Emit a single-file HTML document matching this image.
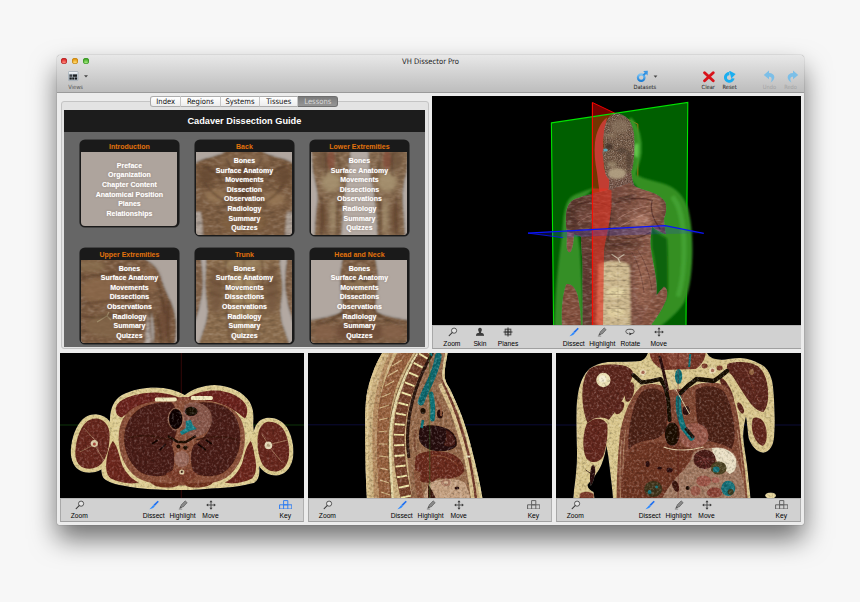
<!DOCTYPE html>
<html><head><meta charset="utf-8"><title>VH Dissector Pro</title>
<style>
html,body{margin:0;padding:0}
body{width:860px;height:602px;background:#f7f7f7;position:relative;overflow:hidden;font-family:"Liberation Sans","DejaVu Sans",sans-serif}
.abs{position:absolute}
#win{position:absolute;left:57px;top:55px;width:747px;height:470px;background:#ececec;border-radius:4px 4px 2px 2px;box-shadow:0 14px 27px rgba(0,0,0,.55),0 0 1px rgba(0,0,0,.6)}
#tbar{position:absolute;left:57px;top:55px;width:747px;height:38px;border-radius:4px 4px 0 0;background:linear-gradient(#e8e8e8,#d0d0d0 55%,#bdbdbd);border-bottom:1px solid #9a9a9a;box-sizing:border-box}
#title{position:absolute;left:57px;width:747px;top:57px;text-align:center;font:7.6px "DejaVu Sans Condensed","Liberation Sans",sans-serif;color:#222}
.tl{position:absolute;top:57.5px;width:6.4px;height:6.4px;border-radius:50%}
.tlab{position:absolute;font:5.7px "DejaVu Sans Condensed","Liberation Sans",sans-serif;color:#333;text-align:center;width:40px;margin-left:-20px;white-space:nowrap}
.lbl{position:absolute;font:6.7px "Liberation Sans",sans-serif;color:#000;text-align:center;width:40px;margin-left:-20px;white-space:nowrap}
.bar{position:absolute;background:#d1d1d1;border-top:1px solid #b5b5b5;box-sizing:border-box}
.view{position:absolute;background:#000;overflow:hidden}
.card{position:absolute;width:98.5px;height:96px;border-radius:5px;background:#1a1a1a;overflow:hidden;box-shadow:0 0 0 .6px #222}
.card .hd{position:absolute;left:0;top:0;width:100%;height:12.3px;text-align:center;color:#e2730c;font:bold 7px/13.6px "Liberation Sans",sans-serif}
.card .im{position:absolute;left:1.3px;top:12.3px;right:1.3px;bottom:1.2px;border-radius:0 0 4px 4px;background:#aea49d;overflow:hidden}
.card .tx{position:absolute;left:0;width:100%;text-align:center;color:#fff;font:bold 7px/9.63px "Liberation Sans",sans-serif;text-shadow:0 0 1.2px rgba(255,255,255,.55),0 0 2px rgba(80,50,30,.5)}
.tab{position:absolute;top:95.7px;height:11px;box-sizing:border-box;border:1px solid #adadad;border-left:none;border-right-color:#c6c6c6;background:linear-gradient(#ffffff,#ededed);font:7.6px/9.4px "DejaVu Sans Condensed","Liberation Sans",sans-serif;color:#111;text-align:center}
</style></head><body>
<div id="win"></div>
<div id="tbar"></div>
<div class="tl" style="left:61.1px;background:radial-gradient(circle at 50% 78%,#ff8f80,#dc2a2c 62%);box-shadow:inset 0 0 0 .5px #a8201f"></div>
<div class="tl" style="left:71.9px;background:radial-gradient(circle at 50% 78%,#ffe07a,#e69a12 62%);box-shadow:inset 0 0 0 .5px #b87a0e"></div>
<div class="tl" style="left:82.5px;background:radial-gradient(circle at 50% 78%,#a8ec82,#45aa2a 62%);box-shadow:inset 0 0 0 .5px #2f8a1c"></div>
<div id="title">VH Dissector Pro</div>
<!-- group box -->
<div class="abs" style="left:60.5px;top:101.4px;width:368.5px;height:247.5px;box-sizing:border-box;border:1px solid #c4c4c4;border-radius:3px;background:#e3e3e3"></div>
<!-- tabs -->
<div class="tab" style="left:150.2px;width:31px;border-left:1px solid #a8a8a8;border-radius:3px 0 0 3px">Index</div>
<div class="tab" style="left:181.2px;width:39.5px">Regions</div>
<div class="tab" style="left:220.7px;width:39.5px">Systems</div>
<div class="tab" style="left:260.2px;width:38px">Tissues</div>
<div class="tab" style="left:298.2px;width:40.2px;border-radius:0 3px 3px 0;background:linear-gradient(#7a7a7a,#969696);color:#d8d8d8;border-color:#6e6e6e">Lessons</div>
<!-- toolbar items -->
<svg class="abs" style="left:68px;top:71px" width="22" height="11" viewBox="0 0 22 11">
 <rect x=".4" y=".6" width="9.6" height="9" rx=".8" fill="#c9d3dc" stroke="#8a96a2" stroke-width=".5"/>
 <rect x=".9" y="1" width="8.6" height="1.6" fill="#eef1f4"/>
 <rect x="1.4" y="3.4" width="3" height="2.4" fill="#3a3f44"/><rect x="5" y="3.4" width="4" height="2.4" fill="#1c1f22"/>
 <rect x="1.4" y="6.4" width="2.4" height="2.2" fill="#15181a"/><rect x="4.2" y="6.4" width="2.2" height="2.2" fill="#15181a"/><rect x="6.9" y="6.4" width="2.2" height="2.2" fill="#15181a"/>
 <path d="M16 4.2 L20 4.2 L18 6.6Z" fill="#444"/>
</svg>
<div class="tlab" style="left:75.6px;top:83.5px;color:#555">Views</div>

<svg class="abs" style="left:636px;top:69.5px" width="24" height="13" viewBox="0 0 24 13">
 <defs><linearGradient id="gbl" x1="0" y1="0" x2="0" y2="1"><stop offset="0" stop-color="#7cc4f6"/><stop offset="1" stop-color="#1c7fd6"/></linearGradient></defs>
 <circle cx="5.2" cy="7.6" r="3.3" fill="none" stroke="url(#gbl)" stroke-width="2.2"/>
 <path d="M7.4 5.2 L10.6 2.1" stroke="#2f8fe0" stroke-width="2" />
 <path d="M7.2 1.1 L11.8 .8 L11.5 5.4Z" fill="#3b97e4"/>
 <path d="M17.6 5.4 L21.4 5.4 L19.5 7.7Z" fill="#444"/>
</svg>
<div class="tlab" style="left:644.9px;top:83.6px;color:#222">Datasets</div>

<svg class="abs" style="left:702px;top:71px" width="14" height="12" viewBox="0 0 14 12">
 <path d="M2.6 1.8 L11.2 9.8 M11.2 1.8 L2.6 9.8" stroke="#d8121a" stroke-width="2.9" stroke-linecap="round"/>
</svg>
<div class="tlab" style="left:708.3px;top:83.6px;color:#222">Clear</div>

<svg class="abs" style="left:723px;top:70.5px" width="14" height="13" viewBox="0 0 14 13">
 <path d="M6.4 1 A5.4 5.4 0 1 0 11.6 7.6 L8.6 7.2 A2.4 2.4 0 1 1 6.4 4.2Z" fill="#1aaef0"/>
 <path d="M6 -0.6 L12.6 3 L8.4 7.6Z" fill="#1aaef0"/>
</svg>
<div class="tlab" style="left:729.6px;top:83.6px;color:#222">Reset</div>

<svg class="abs" style="left:763px;top:70px" width="14" height="14" viewBox="0 0 14 14">
 <path d="M6 .6 L.8 5 L6 9.2 L6 6.8 C8.6 6.8 9.6 8.6 7.6 12.6 C13 9.6 12.6 3.2 6 3Z" fill="#72bcea" opacity=".9"/>
</svg>
<div class="tlab" style="left:769.4px;top:83.6px;color:#a4a4a4">Undo</div>
<svg class="abs" style="left:784.5px;top:70px" width="14" height="14" viewBox="0 0 14 14">
 <path d="M8 .6 L13.2 5 L8 9.2 L8 6.8 C5.4 6.8 4.4 8.6 6.4 12.6 C1 9.6 1.4 3.2 8 3Z" fill="#72bcea" opacity=".9"/>
</svg>
<div class="tlab" style="left:790.6px;top:83.6px;color:#a4a4a4">Redo</div>
<!-- lessons panel -->
<div class="abs" style="left:64.2px;top:109.5px;width:360.4px;height:237.4px;background:#666"></div>
<div class="abs" style="left:64.2px;top:109.5px;width:360.4px;height:22.1px;background:#1c1c1c;color:#fff;text-align:center;font:bold 9.2px/23px 'Liberation Sans',sans-serif">Cadaver Dissection Guide</div>
<svg width="0" height="0" style="position:absolute"><defs>
<filter id="b1" x="-20%" y="-20%" width="140%" height="140%"><feGaussianBlur stdDeviation="1.1"/></filter>
<filter id="b2" x="-20%" y="-20%" width="140%" height="140%"><feGaussianBlur stdDeviation="2.2"/></filter>
<filter id="ctex" x="0" y="0" width="100%" height="100%" color-interpolation-filters="sRGB"><feTurbulence type="fractalNoise" baseFrequency="0.15 0.3" numOctaves="2" seed="2" result="n"/><feColorMatrix in="n" type="matrix" values="0.22 0 0 0 0.39  0.22 0 0 0 0.39  0.22 0 0 0 0.39  0 0 0 0 1" result="g"/><feBlend in="SourceGraphic" in2="g" mode="overlay" result="b"/><feComposite in="b" in2="SourceGraphic" operator="in"/></filter>
<filter id="b05" x="-20%" y="-20%" width="140%" height="140%"><feGaussianBlur stdDeviation="0.6"/></filter>
</defs></svg>

<div class="card" style="left:80.2px;top:140.2px;height:86.6px">
 <div class="hd">Introduction</div><div class="im"></div>
 <div class="tx" style="top:20.5px">Preface<br>Organization<br>Chapter Content<br>Anatomical Position<br>Planes<br>Relationships</div>
</div>

<div class="card" style="left:195.2px;top:140.2px">
 <div class="hd">Back</div>
 <div class="im"><svg width="96" height="83" viewBox="0 0 96 83" style="position:absolute;left:0;top:0">
  <rect width="96" height="83" fill="#b0a69f"/>
  <g filter="url(#ctex)"><g filter="url(#b1)">
   <path d="M30 -2 L66 -2 C68 1 74 3 82 5 C88 6.6 94 9 98 11 L98 85 L89 85 C89 75 91 66 93 58 L93 40 L3 40 L3 58 C5 66 7 75 7 85 L-2 85 L-2 11 C2 9 8 6.6 14 5 C22 3 28 1 30 -2Z" fill="#7b5d42"/>
   <rect x="3" y="14" width="90" height="72" fill="#7b5d42"/>
   <path d="M-2 60 L5 60 C6 68 7 76 7 85 L-2 85Z" fill="#a99c92"/>
   <path d="M98 60 L91 60 C90 68 89 76 89 85 L98 85Z" fill="#a99c92"/>
  </g></g>
  <g filter="url(#b2)" opacity=".8">
   <ellipse cx="20" cy="44" rx="11" ry="7" fill="#9a7a58"/>
   <ellipse cx="78" cy="47" rx="11" ry="7" fill="#9a7a58"/>
   <ellipse cx="48" cy="30" rx="10" ry="20" fill="#6a4c34"/>
   <ellipse cx="10" cy="24" rx="8" ry="10" fill="#664830"/>
   <ellipse cx="88" cy="24" rx="8" ry="10" fill="#664830"/>
   <ellipse cx="48" cy="70" rx="22" ry="12" fill="#80603f"/>
   <ellipse cx="48" cy="8" rx="26" ry="5" fill="#8a6c50"/>
  </g>
   <g filter="url(#b1)" fill="none" stroke="#4a3222" stroke-width="1.4" opacity=".7">
   <path d="M48 4 V80"/><path d="M30 6 C36 18 42 30 48 44 C54 30 60 18 66 6"/><path d="M8 30 C14 40 24 48 34 50 M88 32 C82 42 72 50 62 52"/><path d="M6 14 C14 16 22 22 26 30 M90 14 C82 16 74 22 70 30"/>
  </g>
</svg></div>
 <div class="tx" style="top:15.8px">Bones<br>Surface Anatomy<br>Movements<br>Dissection<br>Observation<br>Radiology<br>Summary<br>Quizzes</div>
</div>

<div class="card" style="left:310.2px;top:140.2px">
 <div class="hd">Lower Extremities</div>
 <div class="im"><svg width="96" height="83" viewBox="0 0 96 83" style="position:absolute;left:0;top:0">
  <rect width="96" height="83" fill="#b4aaa3"/>
  <g filter="url(#ctex)"><g filter="url(#b1)">
   <path d="M0 -2 L40 -2 C39 10 37.6 20 36.6 27 C35.6 32 34.6 36 34 40 C33 52 31.6 66 30.6 85 L3 85 C4 72 5 60 6.4 48 C6.6 40 4 30 1.6 20Z" fill="#866a50"/>
   <path d="M57 -2 L98 -2 L96 20 C93 30 91.6 40 92 48 C92.6 60 93.6 72 94.6 85 L66 85 C65.6 66 64 52 62.6 40 C62 36 60.6 32 59.6 27 C58.6 20 57.6 10 57 -2Z" fill="#866a50"/>
  </g></g>
  <g filter="url(#b2)" opacity=".85">
   <ellipse cx="20" cy="30" rx="10" ry="10" fill="#a89472"/>
   <ellipse cx="76" cy="30" rx="10" ry="10" fill="#a89472"/>
   <ellipse cx="12" cy="8" rx="7" ry="10" fill="#70543c"/>
   <ellipse cx="84" cy="8" rx="7" ry="10" fill="#70543c"/>
   <ellipse cx="12" cy="66" rx="5" ry="16" fill="#6e5038"/>
   <ellipse cx="84" cy="66" rx="5" ry="16" fill="#6e5038"/>
   <ellipse cx="22" cy="64" rx="3" ry="18" fill="#a49070"/>
   <ellipse cx="74" cy="64" rx="3" ry="18" fill="#a49070"/>
  </g>
   <g filter="url(#b1)" fill="none" stroke="#4e3424" stroke-width="1.4" opacity=".65">
   <path d="M14 0 C16 10 16 18 14 24 M26 0 C26 8 28 16 32 22 M82 0 C80 10 80 18 82 24 M70 0 C70 8 68 16 64 22"/><path d="M10 44 C12 56 12 70 10 83 M86 44 C84 56 84 70 86 83 M28 46 C26 58 26 70 27 83 M68 46 C70 58 70 70 69 83"/>
  </g>
  <g filter="url(#b1)" fill="#8a4434" opacity=".5"><ellipse cx="20" cy="8" rx="4" ry="10"/><ellipse cx="76" cy="8" rx="4" ry="10"/></g>
</svg></div>
 <div class="tx" style="top:15.8px">Bones<br>Surface Anatomy<br>Movements<br>Dissections<br>Observations<br>Radiology<br>Summary<br>Quizzes</div>
</div>

<div class="card" style="left:80.2px;top:247.8px">
 <div class="hd">Upper Extremities</div>
 <div class="im"><svg width="96" height="83" viewBox="0 0 96 83" style="position:absolute;left:0;top:0">
  <rect width="96" height="83" fill="#aea49d"/>
  <g filter="url(#ctex)"><g filter="url(#b1)">
   <path d="M-2 -2 L62 -2 C72 2 78 10 81 20 C84 30 90 40 93 50 C96 60 96 72 94 85 L72 85 C74 72 72 60 70 52 C70 62 70 74 72 85 L-2 85Z" fill="#7c5c42"/>
   <path d="M66 52 C68 62 70 72 70 85 L64 85 C65 74 66 62 66 52Z" fill="#aea49d"/>
  </g></g>
  <g filter="url(#b2)" opacity=".8">
   <ellipse cx="24" cy="30" rx="24" ry="14" fill="#8c6a4c"/>
   <ellipse cx="70" cy="20" rx="8" ry="12" fill="#8a6648"/>
   <ellipse cx="30" cy="66" rx="26" ry="12" fill="#82664a"/>
   <ellipse cx="84" cy="60" rx="6" ry="20" fill="#6c4a34"/>
   <ellipse cx="10" cy="6" rx="14" ry="6" fill="#8a7050"/>
  </g>
  <path d="M16 62 L26 56 L30 60 M26 56 L28 52" stroke="#b4a680" stroke-width="1.2" fill="none" filter="url(#b05)" opacity=".6"/>
   <g filter="url(#b1)" fill="none" stroke="#4a3020" stroke-width="1.4" opacity=".65">
   <path d="M0 18 C16 16 36 14 56 8"/><path d="M0 44 C14 42 30 40 50 40 C58 36 62 28 62 16"/><path d="M74 14 C78 26 82 40 84 54 M88 40 C86 54 86 68 88 83 M76 54 C78 64 80 74 80 83"/><path d="M0 56 C12 58 26 58 40 54"/>
  </g>
</svg></div>
 <div class="tx" style="top:15.8px">Bones<br>Surface Anatomy<br>Movements<br>Dissections<br>Observations<br>Radiology<br>Summary<br>Quizzes</div>
</div>

<div class="card" style="left:195.2px;top:247.8px">
 <div class="hd">Trunk</div>
 <div class="im"><svg width="96" height="83" viewBox="0 0 96 83" style="position:absolute;left:0;top:0">
  <rect width="96" height="83" fill="#b3a9a2"/>
  <g filter="url(#ctex)"><g filter="url(#b1)">
   <path d="M10 -2 L84 -2 C84 12 88 24 86 36 C84 48 84 58 88 68 L94 85 L2 85 L8 68 C12 58 12 48 10 36 C8 24 10 12 10 -2Z" fill="#8a6c4e"/>
   <path d="M-2 -2 L5 -2 C7 12 8 24 6 36 C4 46 2 56 -2 64Z" fill="#80624a"/>
   <path d="M98 -2 L91 -2 C89 12 88 24 90 36 C92 46 94 56 98 64Z" fill="#80624a"/>
  </g></g>
  <g filter="url(#b2)" opacity=".85">
   <ellipse cx="48" cy="44" rx="13" ry="34" fill="#a48a62"/>
   <ellipse cx="20" cy="30" rx="7" ry="24" fill="#765840"/>
   <ellipse cx="76" cy="30" rx="7" ry="24" fill="#765840"/>
   <ellipse cx="48" cy="4" rx="20" ry="5" fill="#9c8460"/>
  </g>
   <g filter="url(#b1)" fill="none" stroke="#553a26" stroke-width="1.3" opacity=".6">
   <path d="M48 0 V83"/><path d="M34 12 H62 M33 28 H63 M33 44 H63 M34 60 H62"/><path d="M30 0 C28 20 30 50 34 83 M66 0 C68 20 66 50 62 83"/><path d="M14 8 L26 14 M12 20 L26 26 M12 32 L26 36 M82 8 L70 14 M84 20 L70 26 M84 32 L70 36"/>
  </g>
</svg></div>
 <div class="tx" style="top:15.8px">Bones<br>Surface Anatomy<br>Movements<br>Dissections<br>Observations<br>Radiology<br>Summary<br>Quizzes</div>
</div>

<div class="card" style="left:310.2px;top:247.8px">
 <div class="hd">Head and Neck</div>
 <div class="im"><svg width="96" height="83" viewBox="0 0 96 83" style="position:absolute;left:0;top:0">
  <rect width="96" height="83" fill="#b1a7a0"/>
  <g filter="url(#ctex)"><g filter="url(#b1)">
   <path d="M32 -2 L64 -2 C67 8 68 20 66 32 C65 42 64 48 66 52 C74 56 86 58 98 60 L98 85 L-2 85 L-2 60 C10 58 22 56 30 52 C32 48 31 42 30 32 C28 20 29 8 32 -2Z" fill="#7e5e44"/>
  </g></g>
  <g filter="url(#b2)" opacity=".8">
   <ellipse cx="48" cy="26" rx="13" ry="20" fill="#8e7456"/>
   <ellipse cx="48" cy="72" rx="30" ry="8" fill="#6c4a34"/>
   <ellipse cx="14" cy="72" rx="12" ry="8" fill="#86624a"/>
   <ellipse cx="82" cy="72" rx="12" ry="8" fill="#86624a"/>
  </g>
   <g filter="url(#b1)" fill="none" stroke="#4a3020" stroke-width="1.4" opacity=".65">
   <path d="M36 14 C40 18 56 18 60 14 M40 32 C44 36 52 36 56 32"/><path d="M34 50 C28 58 16 62 4 64 M62 50 C68 58 80 62 92 64"/><path d="M42 52 C44 62 46 72 48 83 C50 72 52 62 54 52"/>
  </g>
  <g filter="url(#b1)" fill="#3a281c" opacity=".6"><ellipse cx="42" cy="20" rx="3" ry="2"/><ellipse cx="54" cy="20" rx="3" ry="2"/></g>
</svg></div>
 <div class="tx" style="top:15.8px">Bones<br>Surface Anatomy<br>Movements<br>Dissections<br>Observations<br>Radiology<br>Summary<br>Quizzes</div>
</div>
<!-- 3D view -->
<div class="view" style="left:432px;top:95.5px;width:369px;height:229.3px">
<svg width="369" height="229.3" viewBox="432 95.5 369 229.3" style="position:absolute;left:0;top:0">
 <defs>
  <filter id="v1" x="-10%" y="-10%" width="120%" height="120%"><feGaussianBlur stdDeviation="1.2"/></filter>
  <filter id="v2" x="-20%" y="-20%" width="140%" height="140%"><feGaussianBlur stdDeviation="2.5"/></filter>
  <filter id="v05" x="-10%" y="-10%" width="120%" height="120%"><feGaussianBlur stdDeviation="0.5"/></filter>
  <filter id="tex" x="0" y="0" width="100%" height="100%"><feTurbulence type="fractalNoise" baseFrequency="0.9" numOctaves="2" seed="3"/><feColorMatrix values="0 0 0 0 0.2  0 0 0 0 0.12  0 0 0 0 0.06  0.9 0.9 0.9 0 -1.05"/><feComposite in2="SourceGraphic" operator="in"/></filter>
  <linearGradient id="gmus" x1="0" y1="0" x2="1" y2="0"><stop offset="0" stop-color="#5c3a30"/><stop offset=".3" stop-color="#6a4236"/><stop offset=".55" stop-color="#7a4e40"/><stop offset=".85" stop-color="#8e5c4a"/><stop offset="1" stop-color="#6a4236"/></linearGradient>
  <filter id="mtex" x="0" y="0" width="100%" height="100%" color-interpolation-filters="sRGB"><feTurbulence type="fractalNoise" baseFrequency="0.18 0.4" numOctaves="2" seed="7" result="n"/><feColorMatrix in="n" type="matrix" values="0.3 0 0 0 0.35  0.3 0 0 0 0.35  0.3 0 0 0 0.35  0 0 0 0 1" result="g"/><feBlend in="SourceGraphic" in2="g" mode="overlay" result="b"/><feComposite in="b" in2="SourceGraphic" operator="in"/></filter>
  <filter id="htex" x="0" y="0" width="100%" height="100%" color-interpolation-filters="sRGB"><feTurbulence type="fractalNoise" baseFrequency="0.8" numOctaves="2" seed="11" result="n"/><feColorMatrix in="n" type="matrix" values="0.45 0 0 0 0.27  0.45 0 0 0 0.27  0.45 0 0 0 0.27  0 0 0 0 1" result="g"/><feBlend in="SourceGraphic" in2="g" mode="overlay" result="b"/><feComposite in="b" in2="SourceGraphic" operator="in"/></filter>
  <clipPath id="cgreen"><polygon points="551.4,122.4 687.8,102 686,326 553.6,326"/></clipPath>
 </defs>
 <!-- green plane -->
 <polygon points="551.4,122.4 687.8,102 686,326 553.6,326" fill="#005f00"/>
 <!-- back half of red plane: outline seen through green -->
 <path d="M614.8 112.7 L637.8 123.6 L637.8 178" stroke="#c86a10" stroke-width=".9" fill="none"/>
 <!-- front half of red plane -->
 <polygon points="592.4,102 614.8,112.7 614.8,326 592.4,326" fill="#ff0000" opacity=".45"/>
 <path d="M592.4 102 L614.8 112.7" stroke="#f00000" stroke-width="1"/>
 <polygon points="551.4,122.4 687.8,102 686,326 553.6,326" fill="none" stroke="#00e400" stroke-width="1.1"/>
 <!-- green skin -->
 <g filter="url(#v1)">
  <path d="M630 118 C637 126 640 140 639 152 C638 160 635 166 633 172 C640 178 654 180 666 184 C677 188 684 196 688 208 C692 224 693 244 692 262 C691 278 689 292 684 302 C678 312 668 320 660 326 L640 326 L650 230 L640 190 L628 176Z" fill="#348f24"/>
  <path d="M596 186 C588 190 578 192 572 196 C566 200 564 210 563 222 C562 236 560 250 558.6 262 C557 276 556 290 555.4 300 C555 310 554.4 318 554.4 326 L584 326 L580 250 L574 206Z" fill="#368f25"/>
  <ellipse cx="637" cy="150" rx="3.4" ry="7" fill="#62c44c"/>
  <path d="M630 118 C638 126 641 140 640 152 C639 160 636 168 634 174" stroke="#3a9a2a" stroke-width="3" fill="none"/>
  <path d="M672 196 C680 204 684 224 684 248 C684 268 682 284 678 296" stroke="#4aa836" stroke-width="5" fill="none" opacity=".7"/>
 </g>
 <path d="M651 226 C656 232 662 235 667 238 C668 254 668 272 668 290 C666 300 662 308 656 314 L655 300 C657 286 656 262 652 248Z" fill="#0a6407" filter="url(#v1)"/>
 <!-- red tinted skin (face front, neck) -->
 <g filter="url(#v05)">
  <path d="M607 117 C600 122 596 132 595 142 C594 152 595 162 597 172 C598 182 600 192 600 200 L612 200 L612 182 L604 168 L603 140 Z" fill="#c23e30"/>
 </g>
 <!-- body muscles -->
 <defs><clipPath id="cbody"><path d="M616 113 C626 113 632.5 121 634 133 C635 146 634.4 158 632.4 168 C630.4 176 624 181 616 181 C610 181 606 177 605 171 L604 163 L602.4 152 L604 146 C603 138 603.6 128 606.6 121 C608.6 116 612 113 616 113Z M609 176 L631.6 172 C632 180 634 187 640 192 L606 200 C608.6 193 609.6 184 609 176Z M606 190 C596 192 584 195 576 198 C570 200 566.5 206 566 214 C565.5 222 566 228 567 232 L581 236 C581 244 581.5 250 582 256 C583 268 582 280 582.5 292 L582.5 326 L651 326 C653 316 655 306 656.5 296 C657.5 286 656 276 654 266 C652 256 650.5 248 650.5 240 L652 226 C656 230 662 232 666 234 C665 228 664 222 664 218 C666 214 667 208 665.5 202 C662 196 654 192 646 190 C640 188 634 186 630 182Z M567 231 L574 233 C574 240 573 246 571 251 C569 253 567 251 566.5 246Z M566 284 C571 282 576 288 578 296 C580 306 581 316 581 326 L562 326 C561 312 562 296 566 284Z M664 286 C668 288 668 294 666 300 C662 310 656 318 650 326 L640 326 C644 312 654 296 664 286Z"/></clipPath></defs>
 <g filter="url(#htex)"><g filter="url(#v05)">
  <path d="M616 113 C626 113 632.5 121 634 133 C635 146 634.4 158 632.4 168 C630.4 176 624 181 616 181 C610 181 606 177 605 171 L604 163 L602.4 152 L604 146 C603 138 603.6 128 606.6 121 C608.6 116 612 113 616 113Z" fill="#745c4a"/>
  <path d="M609 176 L631.6 172 C632 180 634 187 640 192 L606 200 C608.6 193 609.6 184 609 176Z" fill="#74574a"/>
 </g></g>
 <g filter="url(#mtex)"><g filter="url(#v05)">
  <path d="M606 190 C596 192 584 195 576 198 C570 200 566.5 206 566 214 C565.5 222 566 228 567 232 L581 236 C581 244 581.5 250 582 256 C583 268 582 280 582.5 292 L582.5 326 L651 326 C653 316 655 306 656.5 296 C657.5 286 656 276 654 266 C652 256 650.5 248 650.5 240 L652 226 C656 230 662 232 666 234 C665 228 664 222 664 218 C666 214 667 208 665.5 202 C662 196 654 192 646 190 C640 188 634 186 630 182Z" fill="url(#gmus)"/>
  <path d="M567 231 L574 233 C574 240 573 246 571 251 C569 253 567 251 566.5 246Z" fill="#8a5546"/>
  <path d="M566 284 C571 282 576 288 578 296 C580 306 581 316 581 326 L562 326 C561 312 562 296 566 284Z" fill="#82503c"/>
  <path d="M664 286 C668 288 668 294 666 300 C662 310 656 318 650 326 L640 326 C644 312 654 296 664 286Z" fill="#875443"/>
  <g clip-path="url(#cbody)">
   <g filter="url(#v1)">
    <path d="M598 264 C604 259 624 259 630 265 L631 327 L596 327Z" fill="#cbb68c"/>
    <ellipse cx="616" cy="292" rx="9" ry="5" fill="#e6d8a6" opacity=".8"/>
    <ellipse cx="616" cy="312" rx="9" ry="5" fill="#e2d2a0" opacity=".8"/>
    <ellipse cx="614" cy="274" rx="8" ry="4" fill="#d8c698" opacity=".8"/>
   </g>
   <g filter="url(#v2)">
    <ellipse cx="640" cy="220" rx="10" ry="6" fill="#b88470" opacity=".75"/>
    <ellipse cx="586" cy="216" rx="9" ry="6" fill="#7c5044" opacity=".7"/>
    <ellipse cx="657" cy="206" rx="6" ry="9" fill="#90604e" opacity=".8"/>
    <ellipse cx="572" cy="212" rx="4" ry="12" fill="#553229" opacity=".8"/>
    <ellipse cx="618" cy="244" rx="26" ry="4" fill="#4e2c24" opacity=".7"/>
    <ellipse cx="642" cy="280" rx="6" ry="26" fill="#9a6652" opacity=".85"/>
    <ellipse cx="588" cy="274" rx="5" ry="26" fill="#5e382e" opacity=".8"/>
    <ellipse cx="626" cy="196" rx="10" ry="4" fill="#50322a" opacity=".7"/>
   </g>
   <g filter="url(#v05)" fill="none" stroke-linecap="round" opacity=".7">
    <path d="M612 204 C624 198 640 196 652 200" stroke="#4e2a24" stroke-width="1.4"/>
    <path d="M610 206 C598 200 584 200 574 206" stroke="#4e2a24" stroke-width="1.2"/>
    <path d="M611 200 C611 214 610 226 608 240" stroke="#55302a" stroke-width="1.6"/>
    <path d="M652 200 C650 208 652 218 660 228" stroke="#4a2822" stroke-width="1.3"/>
    <path d="M616 236 C628 240 640 238 650 232" stroke="#50302a" stroke-width="1.2"/>
    <path d="M584 236 C592 240 600 240 608 238" stroke="#50302a" stroke-width="1.2"/>
    <path d="M620 226 C630 220 642 214 650 212 M618 218 C628 212 640 206 648 206" stroke="#d0a090" stroke-width=".9" opacity=".7"/>
    <path d="M578 222 C586 216 596 212 606 212" stroke="#c09080" stroke-width=".9" opacity=".6"/>
    <path d="M632 252 C638 262 642 276 644 292 M638 250 C646 262 650 276 652 290" stroke="#5a342c" stroke-width=".9" opacity=".8"/>
    <path d="M606 266 H630 M605 280 H630 M605 294 H630 M606 308 H630" stroke="#a89270" stroke-width="1" opacity=".8"/>
    <path d="M618 262 V326" stroke="#b8a480" stroke-width="1" opacity=".8"/>
    <path d="M612 254 L618 258 L624 254 M618 258 L620 262" stroke="#e0d8c0" stroke-width="1.3"/>
   </g>
  </g>
 </g></g>
 <g filter="url(#v1)">
  <ellipse cx="617" cy="173" rx="9" ry="5.5" fill="#b4a284" opacity=".9"/>
  <ellipse cx="612" cy="164" rx="5" ry="3" fill="#a08e72" opacity=".7"/>
  <ellipse cx="609" cy="146" rx="4" ry="3" fill="#3e3026" opacity=".85"/>
  <ellipse cx="622" cy="150" rx="6" ry="3" fill="#4a382c" opacity=".6"/>
  <ellipse cx="620" cy="126" rx="9" ry="7" fill="#8e7862" opacity=".6"/>
  <ellipse cx="629" cy="160" rx="3" ry="9" fill="#4e3a2e" opacity=".7"/>
  <ellipse cx="611" cy="135" rx="6" ry="2" fill="#9a846a" opacity=".6"/>
 </g>
 <ellipse cx="605.5" cy="149.5" rx="2.2" ry="1.6" fill="#5aa6b8" filter="url(#v05)"/>
 <!-- red plane front strip over body -->
 <path d="M592.4 188 L592.4 326 L603 326 L604 250 C606 236 610 222 611.5 206 L611.5 190 L606 188Z" fill="#e03222" opacity=".62"/>
 <path d="M592.4 102 L592.4 326" stroke="#ff0a00" stroke-width="1.1"/>
 <!-- blue plane -->
 <polygon points="528,232.6 600,228.6 665,225.2 703.8,232.8 665,233.4 600,235.6 563,237.2" fill="#2a3ae0" opacity=".22"/>
 <path d="M528 232.6 L600 228.6 L665 225.2 L703.8 232.8" stroke="#0a14ff" stroke-width="1.3" fill="none"/>
 <path d="M528 232.6 L563 237.2" stroke="#0a14ff" stroke-width=".8" fill="none"/>
</svg>
</div>
<!-- 3D toolbar -->
<div class="bar" style="left:432px;top:324.8px;width:369px;height:24.6px;border-bottom:1px solid #a0a0a0;border-left:1px solid #a8a8a8"></div>
<!-- axial view -->
<div class="view" style="left:60.2px;top:353px;width:244.2px;height:145px">
<svg width="244.2" height="145" viewBox="60.2 353 244.2 145" style="position:absolute;left:0;top:0">
 <defs>
  <filter id="a05" x="-10%" y="-10%" width="120%" height="120%"><feGaussianBlur stdDeviation="0.45"/></filter>
  <filter id="a1" x="-20%" y="-20%" width="140%" height="140%"><feGaussianBlur stdDeviation="1"/></filter>
  <filter id="stex" x="0" y="0" width="100%" height="100%" color-interpolation-filters="sRGB"><feTurbulence type="fractalNoise" baseFrequency="0.4" numOctaves="2" seed="4" result="n"/><feColorMatrix in="n" type="matrix" values="0.3 0 0 0 0.35  0.3 0 0 0 0.35  0.3 0 0 0 0.35  0 0 0 0 1" result="g"/><feBlend in="SourceGraphic" in2="g" mode="overlay" result="b"/><feComposite in="b" in2="SourceGraphic" operator="in"/></filter>
 </defs>
 <path d="M60 425 H305" stroke="#154a10" stroke-width=".7"/>
 <path d="M181.5 353 V498" stroke="#4a0c0c" stroke-width=".7"/>
 <g filter="url(#stex)"><g filter="url(#a05)">
  <!-- torso fat outline -->
  <path d="M156 387.4 C166 387.4 178 390.4 185 395 C192 389.3 204 385 215 385 C230 385.4 244 392 250 402 C254 409 254 416 253.5 424 C254 436 257 450 259 462 C260.5 472 260 480 254 483 C240 487 222 488 206 489 C196 490 188 490.2 182 490 C170 490.2 150 489.6 134 487.4 C120 485.6 108 483 103.6 478 C100 472 101.5 462 104 452 C107 440 110 428 110.2 418 C110.6 408 114 400 122 395 C132 389.4 146 387.2 156 387.4Z" fill="#decd92"/>
  <!-- arms fat -->
  <path d="M98 414.4 C107 415.5 113.6 423 114 434 C114.4 446 112 458 106 466 C100 472.6 90 474 82 471.4 C74 468.4 70.6 460 71 450 C71.6 438 76 426 83 419 C87.6 415 93 413.8 98 414.4Z" fill="#dccb8e"/>
  <path d="M266 418 C274 416.6 282 420 287 427 C292 435 294.4 446 293.4 456 C292.4 466 287 473.6 279 475.2 C271 476.6 263 473 258.6 465 C254 456 252.6 444 253.6 434 C254.6 425 259 419.4 266 418Z" fill="#dccb8e"/>
  <!-- arm muscles -->
  <path d="M97 418.6 C104.6 419.6 109.8 426 109.8 435 C109.8 446 107.6 456 102.6 462.6 C98 468.4 90 470 83.8 467.8 C77.6 465.4 75.2 459 75.6 450.8 C76.2 440.4 79.6 429.6 85.4 423.2 C88.8 419.6 93 418.2 97 418.6Z" fill="#66261d"/>
  <path d="M267 422 C274 421 280 424 284 430 C288 437.4 290 446.6 289.2 455.2 C288.4 463.6 284.2 469.8 277.8 471.2 C271.6 472.4 265.4 469.4 262 463 C258.4 455.8 257.2 445.6 258 436.8 C258.8 429 262 423.2 267 422Z" fill="#66261d"/>
  <path d="M84 428 L96 441 M96 447 L104 460 M80 452 L92 446 M262 434 L267 442 M271 449 L282 462 M272 444 L288 440" stroke="#c9aa80" stroke-width=".7" opacity=".75"/>
  <!-- pectoral muscles -->
  <path d="M117 405 C122 397 140 392.4 156 392.4 C166 392.8 176 395.4 182 398.6 L178 401.4 C168 400.6 158 401.6 148 404.6 C138 407.6 128 412.6 122 417.6 C116 416 114.6 410 117 405Z" fill="#6a241b"/>
  <path d="M188 397.6 C196 392.8 206 390.4 216 390.6 C228 391 240 396 245.6 404 C248.4 409 248 415 245 418.6 C238 412 228 406 218 403 C208 400.4 198 399.6 190 400.8Z" fill="#6a241b"/>
  <!-- chest wall ring -->
  <path d="M182 399.6 C200 398.6 220 401.4 232 409 C242 416 246 428 245 442 C244 456 238 470 226 478 C214 484.6 196 485.6 182 485.6 C168 485.6 150 484.6 138 478 C126 470 120 456 119 442 C118 428 122 416 132 409 C144 401.4 164 398.6 182 399.6Z" fill="#8a5038"/>
  <!-- lungs -->
  <path d="M172 402.6 C160 401.4 146 404 137 411 C128 418 123.6 430 124.4 442 C125.4 454 132 467 142 473 C151 477.6 164 477 172 473 C176 463 175 453 172 445 C176 437 178 429 178 421 C178 413 176 407 172 402.6Z" fill="#4a1d14"/>
  <path d="M199 402.6 C210 401.4 223 404 231 411 C238.6 418 241.4 430 240.4 442 C239.4 454 233 467 223 473 C214 477.6 202 477 194 473 C190 463 190 453 194 445 C200 441 208 435 210 427 C211 417 206 409 199 402.6Z" fill="#4a1d14"/>
  <path d="M128 438 C140 434 156 436 170 440 M196 440 C210 436 226 436 238 440" stroke="#36140e" stroke-width="1.4" fill="none" opacity=".8"/>
  <!-- back muscles -->
  <path d="M113 441 C117 445 119 453 121 461 C124 471 131 478.6 139 482.6 C131 484.6 119 482.6 111 478.6 C105.6 474.6 105.6 464.6 107.4 456.6 C108.4 450.6 110 445 113 441Z" fill="#6c281d"/>
  <path d="M251 441 C247 445 245 453 243 461 C240 471 233 478.6 225 482.6 C233 484.6 245 482.6 252 478.6 C257 474.6 257 464.6 255 456.6 C254 450.6 253 445 251 441Z" fill="#6c281d"/>
  <path d="M150 481 C160 483.6 172 484.4 180 481.6 C180 486 176 487.6 168 487.6 C160 487.6 152 486 150 481Z M214 481 C204 483.6 192 484.4 184 481.6 C184 486 188 487.6 196 487.6 C204 487.6 212 486 214 481Z" fill="#70301f"/>
  <path d="M166 474 C172 470 178 468 182 470 C186 468 192 470 198 474 C194 480 188 482 182 482 C176 482 170 480 166 474Z" fill="#7c3c2a"/>
  <!-- mediastinum / heart -->
  <path d="M186 404 C194 401 204 403 209 409 C214 416 213 426 207 432 C201 437 193 438 188 435 C184 430 183 422 183 416 C183 410 184 406 186 404Z" fill="#875648"/>
  <ellipse cx="176" cy="419" rx="6.6" ry="10" fill="#100504"/>
  <ellipse cx="176" cy="419" rx="7.6" ry="11" fill="none" stroke="#a8806a" stroke-width=".8"/>
  <ellipse cx="191.4" cy="411.4" rx="6.4" ry="4.6" fill="#180806"/>
  <path d="M186 421 L191 420 L193 425 L197 429 L190 431 L182 435 L180 432 L186 428Z" fill="#167e86"/>
  <path d="M168 436 L178 442 L186 442 L196 436" stroke="#1a0806" stroke-width="2.4" fill="none"/>
  <!-- vertebra -->
  <ellipse cx="182" cy="459" rx="7.6" ry="8" fill="#9a6a5c"/>
  <circle cx="178.6" cy="446.4" r="2" fill="#1a0806"/><circle cx="185.6" cy="447.6" r="2.2" fill="#1a0806"/>
  <circle cx="182" cy="472" r="2.6" fill="#dccaa2"/><circle cx="182" cy="472" r="1.1" fill="#3a1a10"/>
  <path d="M166 444 L160 450 M198 444 L206 450 M158 440 L152 444 M206 440 L212 444" stroke="#120604" stroke-width="1.6"/>
  <!-- sternum / ribs cream -->
  <rect x="155" y="397.4" width="22" height="4" rx="1.6" fill="#f0e8bc"/>
  <rect x="191" y="396" width="22" height="4" rx="1.6" fill="#f0e8bc"/>
  <rect x="178.6" y="397" width="10" height="3.4" fill="#8a4a38"/>
  <!-- humerus -->
  <circle cx="94.6" cy="443.6" r="3.6" fill="#d9c9a4"/><circle cx="94.6" cy="444" r="1.5" fill="#a8463a"/>
  <circle cx="268.6" cy="445.4" r="3.8" fill="#e2d6b4"/><circle cx="268.6" cy="445.4" r="1.6" fill="#c8b48e"/>
 </g></g>
</svg>
</div>
<div class="bar" style="left:60.2px;top:498px;width:244.2px;height:23.5px;border-bottom:1px solid #a0a0a0;border-left:1px solid #a8a8a8;border-right:1px solid #b0b0b0"></div>
<!-- sagittal view -->
<div class="view" style="left:308px;top:353px;width:244.4px;height:145px">
<svg width="244.4" height="145" viewBox="308 353 244.4 145" style="position:absolute;left:0;top:0">
 <defs>
  <filter id="s05" x="-10%" y="-10%" width="120%" height="120%"><feGaussianBlur stdDeviation="0.45"/></filter>
  <filter id="s1" x="-20%" y="-20%" width="140%" height="140%"><feGaussianBlur stdDeviation="1.2"/></filter>
  <filter id="stex2" x="0" y="0" width="100%" height="100%" color-interpolation-filters="sRGB"><feTurbulence type="fractalNoise" baseFrequency="0.4" numOctaves="2" seed="9" result="n"/><feColorMatrix in="n" type="matrix" values="0.36 0 0 0 0.32  0.36 0 0 0 0.32  0.36 0 0 0 0.32  0 0 0 0 1" result="g"/><feBlend in="SourceGraphic" in2="g" mode="overlay" result="b"/><feComposite in="b" in2="SourceGraphic" operator="in"/></filter>
  <clipPath id="sbody"><path d="M382.6 352 C378 360 375 366 373 372 C370 380 367.6 388 366.4 396 C365.4 404 365.2 412 365.2 420 C365.2 440 365.4 460 365.8 476 L366.8 499 L482.6 499 C480 482 476 466 472 450 C469 438 466 428 462.6 418 C459 408 454 398 450.6 390 C447 384 444.6 380 444.6 375 C444.6 368 446.6 360 447.8 352Z"/></clipPath>
 </defs>
 <path d="M308 424.8 H553" stroke="#10104e" stroke-width=".7"/>
 <g filter="url(#stex2)"><g filter="url(#s05)">
  <path d="M382.6 352 C378 360 375 366 373 372 C370 380 367.6 388 366.4 396 C365.4 404 365.2 412 365.2 420 C365.2 440 365.4 460 365.8 476 L366.8 499 L482.6 499 C480 482 476 466 472 450 C469 438 466 428 462.6 418 C459 408 454 398 450.6 390 C447 384 444.6 380 444.6 375 C444.6 368 446.6 360 447.8 352Z" fill="#ccb07e"/>
  <g clip-path="url(#sbody)">
   <!-- back: mottled muscle band -->
   <path d="M398 352 C390 366 384 382 380 398 C377 414 376 432 376.4 450 C376.8 468 378 484 379 499 L392 499 C390 480 388.6 460 388.6 440 C388.6 422 391 404 396 388 C401 374 408 362 414 352Z" fill="#96603e"/>
   <path d="M390 352 C383 366 378 382 375 398 C372.6 414 372 432 372.4 450 L374 499 L379 499 C377 470 376.4 440 378 414 C380 390 386 368 394 352Z" fill="#b48a5e"/>
   <g stroke="#dcc590" stroke-width="1.1" fill="none" opacity=".85">
    <path d="M392 366 L402 360 M388 376 L398 370 M385 386 L394 381 M382 397 L391 393 M380 408 L389 405 M379 420 L388 418 M378.6 432 L387.6 431 M378.6 444 L387.6 444 M379 456 L388 457 M379.6 468 L388.6 470 M380 480 L389 483 M381 492 L390 495"/>
   </g>
   <!-- spinal canal -->
   <path d="M418.4 352 C410 364 404 378 399 392 C394 406 391 420 390.2 434 C389.6 448 390.4 466 391.4 480 L392.6 499" stroke="#e6daa8" stroke-width="2.6" fill="none"/>
   <path d="M416.8 352 C408.4 364 402.4 378 397.4 392 C392.4 406 389.4 420 388.6 434 C388 448 388.8 466 389.8 480 L391 499" stroke="#7a5632" stroke-width=".8" fill="none"/>
   <!-- vertebral column -->
   <path d="M426 352 C418 364 411.6 378 407 392 C402 406 399.6 420 399 434 C398.6 448 400 466 402.6 480 L406.6 499" stroke="#74402c" stroke-width="11.4" fill="none"/>
   <path d="M426 352 C418 364 411.6 378 407 392 C402 406 399.6 420 399 434 C398.6 448 400 466 402.6 480 L406.6 499" stroke="#efe6a6" stroke-width="10.2" fill="none" stroke-dasharray="1.9 8.5" stroke-dashoffset="-4"/>
   <!-- anterior: mediastinum base -->
   <path d="M432 352 L447 352 C445 362 444.6 372 446 380 C448 390 454 400 458 412 C462 424 466 438 469 452 C472 466 475 482 477 499 L412 499 C410 480 406.6 460 406 440 C405.6 424 408 408 412.6 394 C417 380 425 364 432 352Z" fill="#966a4c"/>
   <!-- dark aorta strip -->
   <path d="M433 352 C426 364 419.6 378 415 392 C410.6 406 408 420 407.6 436 C407.4 446 408 452 409 458" stroke="#2a120c" stroke-width="3" fill="none"/>
   <!-- heart / dark cavity -->
   <path d="M420.6 427 C428 424 440 425 448 429 C455 433 458 440 456.4 446 C452 451.4 440 452 432 450.4 C425 448.6 419.6 444 419 438 C418.6 432 419.4 429 420.6 427Z" fill="#260c07"/>
   <path d="M446 430 C452 432 456 438 455 444 C452 447 447 447 444 445 C446 440 447 435 446 430Z" fill="#4a1e14"/>
   <ellipse cx="423" cy="411" rx="2.6" ry="3" fill="#1a0806"/>
   <ellipse cx="440" cy="414" rx="3" ry="4.6" fill="#2a100a"/>
   <path d="M416 430 C414 438 414 446 416 452" stroke="#7a4a30" stroke-width="2" fill="none"/>
   <!-- liver -->
   <path d="M416 456 C422 450.6 436 449.6 448 452.6 C458 455.6 464 462 464.4 470 C462 478 450 479.6 438 478 C432 484 424 484 418 480 C414.6 474 414 462 416 456Z" fill="#6a2c1c"/>
   <path d="M430 456 C440 454 452 458 458 466" stroke="#8a4a30" stroke-width=".8" fill="none"/>
   <!-- stomach/intestine -->
   <path d="M432 482 C442 478 456 478 464 482 C468 488 470 494 470 499 L424 499 C424 492 427 485 432 482Z" fill="#c4a080"/>
   <ellipse cx="446" cy="482.6" rx="5" ry="3.6" fill="#a87860"/><ellipse cx="446" cy="482.6" rx="2.4" ry="1.6" fill="#d8b898"/>
   <ellipse cx="457" cy="488" rx="2.4" ry="1.6" fill="#2a100a"/>
   <path d="M428 484 C432 490 434 494 436 499 L428 499Z" fill="#3a160e"/>
   <path d="M414 470 C414 480 416 490 418 499 L424 499 C422 490 420 480 420 472Z" fill="#8a5238"/>
   <!-- trachea teal -->
   <path d="M438.4 356 C437 366 433 376 428 386 C425 392 422.6 397 421 402" stroke="#0e686e" stroke-width="6.6" fill="none" stroke-linecap="round"/>
   <path d="M431 394 C432.6 401 433.4 409 432.4 419" stroke="#0f7278" stroke-width="4.8" fill="none" stroke-linecap="round"/>
   <path d="M423 420 L421.6 428" stroke="#0f7278" stroke-width="2.6" fill="none"/>
   <path d="M430 352 L432 356" stroke="#0f7278" stroke-width="2" fill="none"/>
   <!-- anterior chest wall -->
   <path d="M440 384 C444 394 450 404 454 416 C458 428 462 440 465 452 C468 466 471 482 473 499" stroke="#d9c08c" stroke-width="4" fill="none"/>
   <path d="M443 380 C447 392 453 404 457 416 C461 428 465 440 468 452 C471 466 474 482 476 499" stroke="#70382a" stroke-width="2.2" fill="none"/>
   <path d="M447.8 352 C446.6 360 444.6 368 444.6 375 C444.6 380 447 384 450.6 390 C454 398 459 408 462.6 418 C466 428 469 438 472 450 C476 466 480 482 482.6 499" stroke="#dfcf98" stroke-width="5" fill="none"/>
   <path d="M436 400 C440 404 442 410 441 416" stroke="#8a5238" stroke-width="2" fill="none"/>
   <path d="M382.6 352 C378 360 375 366 373 372 C370 380 367.6 388 366.4 396 C365.4 404 365.2 412 365.2 420 C365.2 440 365.4 460 365.8 476 L366.8 499" stroke="#dcc48c" stroke-width="6" fill="none"/>
   <rect x="466.4" y="455.6" width="3.6" height="2" fill="#f4ecc8"/>
  </g>
 </g></g>
 <path d="M429.8 353 V498" stroke="#2a6a1c" stroke-width=".6" opacity=".8"/>
</svg>
</div>
<div class="bar" style="left:308px;top:498px;width:244.4px;height:23.5px;border-bottom:1px solid #a0a0a0;border-left:1px solid #a8a8a8;border-right:1px solid #b0b0b0"></div>
<!-- coronal view -->
<div class="view" style="left:556.4px;top:353px;width:244.6px;height:145px">
<svg width="244.6" height="145" viewBox="556.4 353 244.6 145" style="position:absolute;left:0;top:0">
 <defs>
  <filter id="c05" x="-10%" y="-10%" width="120%" height="120%"><feGaussianBlur stdDeviation="0.45"/></filter>
  <filter id="stex3" x="0" y="0" width="100%" height="100%" color-interpolation-filters="sRGB"><feTurbulence type="fractalNoise" baseFrequency="0.4" numOctaves="2" seed="21" result="n"/><feColorMatrix in="n" type="matrix" values="0.34 0 0 0 0.33  0.34 0 0 0 0.33  0.34 0 0 0 0.33  0 0 0 0 1" result="g"/><feBlend in="SourceGraphic" in2="g" mode="overlay" result="b"/><feComposite in="b" in2="SourceGraphic" operator="in"/></filter>
 </defs>
 <path d="M556 425 H802" stroke="#12124e" stroke-width=".7"/>
 <g filter="url(#stex3)"><g filter="url(#c05)">
  <!-- body fat outline -->
  <path d="M648.6 352 C647 357 644 360.4 640 361 C630 362 618 361.4 608 362 C600 363 594 365.6 590 368.6 C584 374 581 382 579 390 C577.4 398 576.8 406 576.8 412.6 C576.6 426 577 440 577.4 452 C577.6 464 576 478 574.4 490 L573.6 499 L595 499 L594 492 C590 490 588 487.6 588 485 C593 479 599 472 602 464.6 C604.6 458 606 452 606.7 445.7 C608 452 609 458 609.6 464 C611 476 612.6 488 613.4 499 L751 499 C750 488 748.6 476 747.6 466 C746 454 744 444 743.6 436 C744 428 745 422 746.4 416.6 C747.6 424 748 432 749 438 C751.6 446 757 452 763.6 452.8 C770 452 774 446 774.6 436 C775.4 426 775.2 418 775 412.6 C774.6 402 774.4 392 772.8 382 C770.6 372 766 366 760.6 364 C754 360.4 748 358.4 741 358 C733 357.8 726 360 720 359.6 C713 359 708.6 356.6 707 352Z" fill="#d9c68c"/>
  <ellipse cx="771" cy="495.6" rx="5.4" ry="3.2" fill="#e4d49c"/>
  <!-- left deltoid -->
  <path d="M590 369 C597 364.6 610 364 620 365 C627 365.6 632 368.2 633.6 373 C632 380 629 388 625 396 C621 404 615 413 609 420 C603 416 595 417 588 423 C584 414 582.4 402 582.8 392 C583.2 382 585.6 374 590 369Z" fill="#5c251b"/>
  <path d="M587 424 C594 417 603 417 607.6 424 C608.6 434 607 447 603.6 456 C600 463 592 464 587 459 C582.6 450 582.6 436 587 424Z" fill="#62281e"/>
  <path d="M592 466 C594 464 596 466 595.6 472 C595 478 593 484 591 486 C590 480 590 472 592 466Z" fill="#2a0e0a"/>
  <path d="M586 470 L592 474" stroke="#2a0e0a" stroke-width=".8"/>
  <path d="M580 494 C584 491 590 491 594 494 L594 499 L580 499Z" fill="#7a3a2a"/>
  <circle cx="603.8" cy="380" r="7.2" fill="#ebe0b4"/>
  <circle cx="603" cy="379" r="3.6" fill="#f4ecd0"/>
  <ellipse cx="630" cy="392" rx="4.2" ry="10" fill="#5c251b" transform="rotate(14 630 392)"/>
  <ellipse cx="620" cy="408" rx="3.6" ry="7" fill="#5c251b" transform="rotate(30 620 408)"/>
  <!-- right deltoid -->
  <path d="M728 364 C736 361 750 361.4 758 366 C765 371 768.4 382 768.6 394 C768.8 402 767 408 764 412 C760 412 754 408 750 402 C744 394 738 384 733 376 C729 372 726 368 728 364Z" fill="#5c251b"/>
  <path d="M746 368 L760 404" stroke="#8a4a38" stroke-width=".7" opacity=".7"/>
  <ellipse cx="752" cy="372" rx="2.4" ry="3" fill="#a87a50" opacity=".8"/>
  <path d="M754 418 C759 416 764.6 420 766.4 428 C768 436 767 444 763 446 C758 444 754 438 752.6 430 C751.6 424 752.6 420 754 418Z" fill="#62281e"/>
  <path d="M721 378 C725 378 730 386 733 394 C735 400 735 404 733 404 C728 400 724 392 722 386 C720.6 382 720 379 721 378Z" fill="#5c251b"/>
  <ellipse cx="741" cy="408" rx="2.6" ry="6" fill="#5c251b" transform="rotate(-25 741 408)"/>
  <!-- neck -->
  <path d="M650 352 L706 352 C706 359 702 365 696 369 L664 370 C656 366 650 360 650 352Z" fill="#743626"/>
  <path d="M666 352 L690 352 L688 366 L670 366Z" fill="#8a4a38"/>
  <ellipse cx="705" cy="366" rx="3" ry="2.4" fill="#7a3a2a"/><ellipse cx="720" cy="368" rx="3" ry="2.4" fill="#7a3a2a"/>
  <!-- chest wall -->
  <path d="M642 386 C650 382 664 384 670 390 L690 388 C698 382 716 380 726 386 C734 394 738 410 740 428 C742 448 746 470 748 499 L617 499 C617 478 618 458 620 438 C622 418 632 394 642 386Z" fill="#804632"/>
  <path d="M622 440 C620 460 620 480 621 499 M626 430 C623 452 623 476 624 499" stroke="#c8a47c" stroke-width=".8" fill="none" opacity=".7"/>
  <path d="M738 430 C741 452 744 476 745 499" stroke="#c8a47c" stroke-width=".8" fill="none" opacity=".7"/>
  <!-- lungs -->
  <path d="M645 390 C652 387 661 389 665 394 C667 404 667.6 416 667 426 C666 434 660 439 650 440 C642 441 633 444 629 450 C628 438 630 422 634 408 C636.6 399 640 393 645 390Z" fill="#4e2018"/>
  <path d="M696 390 C703 385 716 385 724 391 C730 399 733 412 734.6 426 C735.6 436 735 443 732 449 C724 444 712 441 704 441 C700 434 698 424 696.6 412 C696 404 695.6 396 696 390Z" fill="#4e2018"/>
  <!-- liver -->
  <path d="M628 454 C634 443.6 650 441 664 443 C676 445 688 447 693 451 C691 460 686 468 679 474 C673 480 668 488 664 499 L622 499 C621.6 484 623 466 628 454Z" fill="#6e3424"/>
  <ellipse cx="653.6" cy="489" rx="9" ry="8" fill="#40341a"/>
  <circle cx="650" cy="492" r="2" fill="#127078"/><circle cx="657" cy="487" r="1.4" fill="#127078"/>
  <ellipse cx="648" cy="464" rx="2" ry="3" fill="#2a100a"/><ellipse cx="660" cy="468" rx="2.4" ry="1.6" fill="#2a100a"/>
  <!-- heart -->
  <path d="M684 426 C690 421 702 422 707 429 C711 436 708 445 699 447.6 C690 449.6 682 446 680 439 C679 433 681 429 684 426Z" fill="#985848"/>
  <path d="M664 447 C674 451 690 451 704 447" stroke="#dcc8a0" stroke-width="1.2" fill="none"/>
  <ellipse cx="672.6" cy="434" rx="7.4" ry="11.6" fill="#1c0a06"/>
  <ellipse cx="686.6" cy="410.6" rx="3.4" ry="4.6" fill="#2a0e0a"/>
  <!-- vessels black -->
  <path d="M633.6 375 L642 382.4 L652 381 L661 379 L666 388 L668.6 400 L670 420" stroke="#150705" stroke-width="4" fill="none" stroke-linejoin="round" stroke-linecap="round"/>
  <path d="M727.4 371 L720 377 L714 381 L706 380 L697 379 L688 386 L681 393" stroke="#150705" stroke-width="4.4" fill="none" stroke-linejoin="round" stroke-linecap="round"/>
  <path d="M660 356 L664 372 L668 390" stroke="#2a100a" stroke-width="3" fill="none"/>
  <circle cx="643.4" cy="372.4" r="3.2" fill="#e8d8b0"/><circle cx="643.4" cy="372.4" r="1.7" fill="#a86a54"/>
  <circle cx="713" cy="370.4" r="3.2" fill="#e8d8b0"/><circle cx="713" cy="370.4" r="1.7" fill="#a86a54"/>
  <!-- trachea teal -->
  <ellipse cx="679" cy="376.4" rx="3.6" ry="7.4" fill="#0f7076"/>
  <path d="M679 398 C678 408 680 418 684 428 L692 438" stroke="#0f7076" stroke-width="5.4" fill="none" stroke-linecap="round"/>
  <path d="M690.6 354 L689.6 367" stroke="#0f7076" stroke-width="2" fill="none"/>
  <path d="M671 380 L690 414" stroke="#d8c8a0" stroke-width="1" fill="none"/>
  <path d="M686 428 L694 438" stroke="#1a1210" stroke-width="3.4" fill="none"/>
  <!-- abdomen -->
  <path d="M694 452 C704 446 722 447 734 453 C740 462 744 480 746 499 L662 499 C668 488 674 480 680 474 C687 468 692 460 694 452Z" fill="#a07860"/>
  <path d="M712 448 C722 446 732 450 736 458 C738 466 736 472 730 474 C724 470 718 462 714 456Z" fill="#eadfc4"/>
  <ellipse cx="705" cy="459.4" rx="11" ry="9.6" fill="#4a1a17"/>
  <path d="M705 459 L696 454 M705 459 L697 462 M705 459 L700 467 M705 459 L707 469 M705 459 L713 466 M705 459 L715 459" stroke="#7a3a34" stroke-width=".8"/>
  <ellipse cx="719" cy="468" rx="8" ry="6.6" fill="#4e4220"/>
  <ellipse cx="716.6" cy="469.4" rx="3.4" ry="3" fill="#127078"/>
  <ellipse cx="728.6" cy="488.4" rx="7" ry="7.6" fill="#127078"/>
  <ellipse cx="731" cy="492" rx="3" ry="3" fill="#3a3a20"/>
  <ellipse cx="704" cy="481" rx="7.4" ry="5.4" fill="#9c5446"/>
  <ellipse cx="715" cy="492.6" rx="7.6" ry="5" fill="#8a4236"/>
  <ellipse cx="696" cy="491" rx="5" ry="5" fill="#9a5a4a"/>
  <ellipse cx="716" cy="480" rx="4" ry="3" fill="#a86454"/>
  <ellipse cx="676" cy="486" rx="3" ry="6" fill="#3a140e" transform="rotate(-20 676 486)"/>
  <ellipse cx="670" cy="470" rx="3" ry="2.4" fill="#2a0e0a"/>
  <ellipse cx="688" cy="488" rx="2" ry="2" fill="#1a0806"/>
 </g></g>
 <path d="M678.5 353 V498" stroke="#5a1212" stroke-width=".6" opacity=".7"/>
</svg>
</div>
<div class="bar" style="left:556.4px;top:498px;width:244.6px;height:23.5px;border-bottom:1px solid #a0a0a0;border-left:1px solid #a8a8a8;border-right:1px solid #b0b0b0"></div>
<!-- toolbar icons -->
<svg width="0" height="0" style="position:absolute"><defs>
 <symbol id="i-zoom" viewBox="0 0 12 12"><circle cx="7.3" cy="4.4" r="3.1" fill="#e4e4e4" stroke="#3c3c3c" stroke-width="1"/><path d="M5 6.8 L1.4 10.4" stroke="#3c3c3c" stroke-width="1.3" stroke-linecap="round"/></symbol>
 <symbol id="i-skin" viewBox="0 0 12 12"><path d="M6 1 C7.6 1 8.3 2.2 8.2 3.6 C8.1 4.8 7.6 5.6 7.2 6 L7.2 7 C8.6 7.4 10.4 7.8 10.6 9.2 L10.6 10.4 L1.4 10.4 L1.4 9.2 C1.6 7.8 3.4 7.4 4.8 7 L4.8 6 C4.4 5.6 3.9 4.8 3.8 3.6 C3.7 2.2 4.4 1 6 1Z" fill="#3a3a3a"/><rect x="1.2" y="9.4" width="9.6" height="1.4" fill="#555"/></symbol>
 <symbol id="i-planes" viewBox="0 0 12 12"><rect x="2" y="2" width="8" height="8" fill="#4a4a4a"/><path d="M6 .6 V11.4 M.6 6 H11.4" stroke="#2a2a2a" stroke-width="1.1"/><rect x="3.2" y="3.2" width="2" height="2" fill="#bbb"/><rect x="6.8" y="3.2" width="2" height="2" fill="#bbb"/><rect x="3.2" y="6.8" width="2" height="2" fill="#bbb"/><rect x="6.8" y="6.8" width="2" height="2" fill="#bbb"/></symbol>
 <symbol id="i-dissect" viewBox="0 0 12 12"><path d="M10.4 .8 L11.8 2.2 L7 7.2 L5.4 5.8Z" fill="#1f6ff0"/><path d="M5.2 6 L7 7.6 C5.4 9.8 3.4 10.8 .6 11 C2 9.4 3.6 7.8 5.2 6Z" fill="#2f8bff"/></symbol>
 <symbol id="i-high" viewBox="0 0 12 12"><path d="M8.6 1 L11 3.2 L6 8.6 L3.4 6.4Z" fill="#8a8a8a" stroke="#444" stroke-width=".6"/><path d="M3.2 7 L5.2 8.8 L3.6 10 L1.6 10.4 L2.2 8.6Z" fill="#555"/><path d="M1 11 H5" stroke="#666" stroke-width=".7"/></symbol>
 <symbol id="i-rotate" viewBox="0 0 14 12"><ellipse cx="7" cy="5.4" rx="5" ry="2.7" fill="none" stroke="#3a3a3a" stroke-width="1"/><path d="M6.2 6.6 L9 8.2 L6.4 9.8Z" fill="#3a3a3a"/><rect x="5" y="7.4" width="2" height="1.6" fill="#d1d1d1"/><path d="M6.2 6.6 L9 8.2 L6.4 9.8Z" fill="#3a3a3a"/></symbol>
 <symbol id="i-move" viewBox="0 0 12 12"><path d="M6 1.8 V10.2 M1.8 6 H10.2" stroke="#3a3a3a" stroke-width="1"/><path d="M6 .2 L7.8 2.6 H4.2Z M6 11.8 L7.8 9.4 H4.2Z M.2 6 L2.6 4.2 V7.8Z M11.8 6 L9.4 4.2 V7.8Z" fill="#3a3a3a"/></symbol>
 <symbol id="i-key" viewBox="0 0 14 10"><path d="M4.8 .6 H9.2 V5 H4.8Z M.6 5 H13.4 V9.4 H.6Z M4.8 5 V9.4 M9.2 5 V9.4" fill="none" stroke="currentColor" stroke-width="1"/></symbol>
</defs></svg>
<svg class="abs" style="left:447.9px;top:327.2px" width="10" height="10"><use href="#i-zoom"/></svg>
<div class="lbl" style="left:451.9px;top:340.4px">Zoom</div>
<svg class="abs" style="left:474.9px;top:327.2px" width="10" height="10"><use href="#i-skin"/></svg>
<div class="lbl" style="left:479.9px;top:340.4px">Skin</div>
<svg class="abs" style="left:503.1px;top:327.2px" width="10" height="10"><use href="#i-planes"/></svg>
<div class="lbl" style="left:508.1px;top:340.4px">Planes</div>
<svg class="abs" style="left:568.7px;top:327.2px" width="10" height="10"><use href="#i-dissect"/></svg>
<div class="lbl" style="left:573.7px;top:340.4px">Dissect</div>
<svg class="abs" style="left:597.3px;top:327.2px" width="10" height="10"><use href="#i-high"/></svg>
<div class="lbl" style="left:602.3px;top:340.4px">Highlight</div>
<svg class="abs" style="left:624.4px;top:327.2px" width="12" height="10"><use href="#i-rotate"/></svg>
<div class="lbl" style="left:630.4px;top:340.4px">Rotate</div>
<svg class="abs" style="left:653.7px;top:327.2px" width="10" height="10"><use href="#i-move"/></svg>
<div class="lbl" style="left:658.7px;top:340.4px">Move</div>
<svg class="abs" style="left:75.3px;top:499.6px" width="10" height="10"><use href="#i-zoom"/></svg>
<div class="lbl" style="left:79.3px;top:511.7px">Zoom</div>
<svg class="abs" style="left:148.6px;top:499.6px" width="10" height="10"><use href="#i-dissect"/></svg>
<div class="lbl" style="left:153.6px;top:511.7px">Dissect</div>
<svg class="abs" style="left:177.5px;top:499.6px" width="10" height="10"><use href="#i-high"/></svg>
<div class="lbl" style="left:182.5px;top:511.7px">Highlight</div>
<svg class="abs" style="left:205.5px;top:499.6px" width="10" height="10"><use href="#i-move"/></svg>
<div class="lbl" style="left:210.5px;top:511.7px">Move</div>
<svg class="abs" style="left:278.6px;top:499.8px;color:#2b7bf0" width="13.4" height="9.6"><use href="#i-key"/></svg>
<div class="lbl" style="left:285.3px;top:511.7px">Key</div>
<svg class="abs" style="left:323.4px;top:499.6px" width="10" height="10"><use href="#i-zoom"/></svg>
<div class="lbl" style="left:327.4px;top:511.7px">Zoom</div>
<svg class="abs" style="left:396.7px;top:499.6px" width="10" height="10"><use href="#i-dissect"/></svg>
<div class="lbl" style="left:401.7px;top:511.7px">Dissect</div>
<svg class="abs" style="left:425.6px;top:499.6px" width="10" height="10"><use href="#i-high"/></svg>
<div class="lbl" style="left:430.6px;top:511.7px">Highlight</div>
<svg class="abs" style="left:453.6px;top:499.6px" width="10" height="10"><use href="#i-move"/></svg>
<div class="lbl" style="left:458.6px;top:511.7px">Move</div>
<svg class="abs" style="left:526.7px;top:499.8px;color:#5e5e5e" width="13.4" height="9.6"><use href="#i-key"/></svg>
<div class="lbl" style="left:533.4px;top:511.7px">Key</div>
<svg class="abs" style="left:571.3px;top:499.6px" width="10" height="10"><use href="#i-zoom"/></svg>
<div class="lbl" style="left:575.3px;top:511.7px">Zoom</div>
<svg class="abs" style="left:644.6px;top:499.6px" width="10" height="10"><use href="#i-dissect"/></svg>
<div class="lbl" style="left:649.6px;top:511.7px">Dissect</div>
<svg class="abs" style="left:673.5px;top:499.6px" width="10" height="10"><use href="#i-high"/></svg>
<div class="lbl" style="left:678.5px;top:511.7px">Highlight</div>
<svg class="abs" style="left:701.5px;top:499.6px" width="10" height="10"><use href="#i-move"/></svg>
<div class="lbl" style="left:706.5px;top:511.7px">Move</div>
<svg class="abs" style="left:774.6px;top:499.8px;color:#5e5e5e" width="13.4" height="9.6"><use href="#i-key"/></svg>
<div class="lbl" style="left:781.3px;top:511.7px">Key</div>
</body></html>
